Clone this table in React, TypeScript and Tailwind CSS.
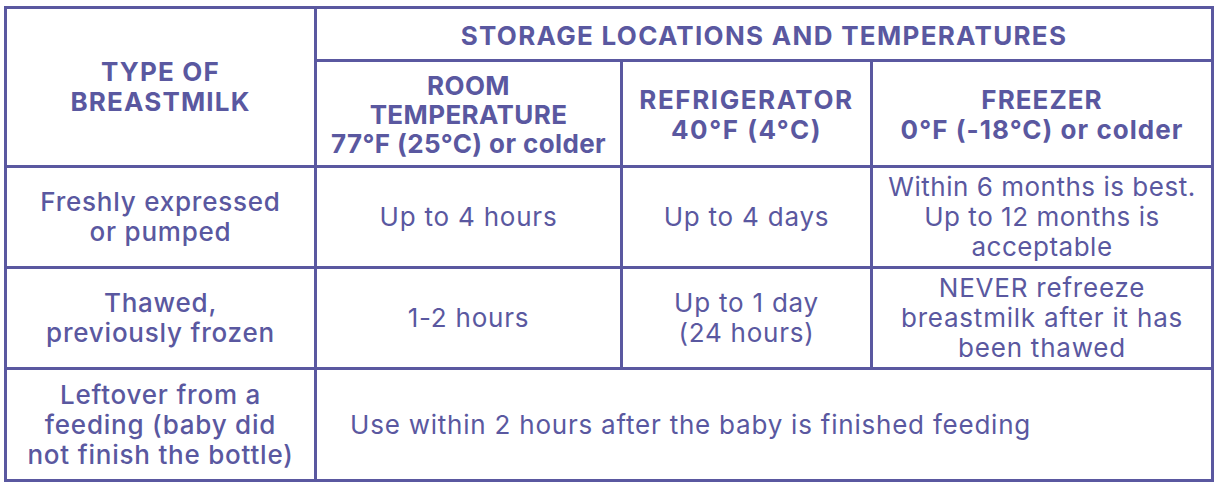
import React from "react";

const cell = "bg-white flex flex-col items-center justify-center text-center";
const head = `${cell} font-bold text-[26px]`;
const label = `${cell} font-medium text-[26px] leading-[30px] tracking-[0.03em]`;
const body = `${cell} font-normal text-[26px] leading-[30px]`;

export default function App() {
  return (
    <div className="w-[1220px] h-[489px] bg-white pt-[6px] pl-[4px]" style={{ fontFamily: "Inter, 'Noto Sans', sans-serif" }}>
      <div className="w-[1210px] bg-[#5a58a0] p-[3px] grid gap-[3px] grid-cols-[307px_303px_247px_338px] grid-rows-[50px_103px_98px_98px_109px] text-[#5a58a0]">
        <div className={`${head} row-span-2 leading-[30px] tracking-[0.045em]`}>
          <div>TYPE OF</div>
          <div>BREASTMILK</div>
        </div>
        <div className={`${head} col-span-3 leading-[30px] pt-[4px] tracking-[0.05em]`}>
          STORAGE LOCATIONS AND TEMPERATURES
        </div>
        <div className={`${head} leading-[29px] pt-[2px] tracking-[0.015em]`}>
          <div>ROOM</div>
          <div>TEMPERATURE</div>
          <div>77°F (25°C) or colder</div>
        </div>
        <div className={`${head} leading-[30px] pt-[2px] tracking-[0.06em]`}>
          <div>REFRIGERATOR</div>
          <div>40°F (4°C)</div>
        </div>
        <div className={`${head} leading-[30px] pt-[2px] tracking-[0.04em]`}>
          <div>FREEZER</div>
          <div>0°F (-18°C) or colder</div>
        </div>

        <div className={label}>
          <div>Freshly expressed</div>
          <div>or pumped</div>
        </div>
        <div className={`${body} tracking-[0.03em]`}>Up to 4 hours</div>
        <div className={`${body} tracking-[0.03em]`}>Up to 4 days</div>
        <div className={`${body} tracking-[0.02em]`}>
          <div>Within 6 months is best.</div>
          <div>Up to 12 months is</div>
          <div>acceptable</div>
        </div>

        <div className={label}>
          <div>Thawed,</div>
          <div>previously frozen</div>
        </div>
        <div className={`${body} tracking-[0.03em]`}>1-2 hours</div>
        <div className={`${body} tracking-[0.03em]`}>
          <div>Up to 1 day</div>
          <div>(24 hours)</div>
        </div>
        <div className={`${body} tracking-[0.03em]`}>
          <div>NEVER refreeze</div>
          <div>breastmilk after it has</div>
          <div>been thawed</div>
        </div>

        <div className={label}>
          <div>Leftover from a</div>
          <div>feeding (baby did</div>
          <div>not finish the bottle)</div>
        </div>
        <div className="bg-white col-span-3 flex items-center pl-[33px] text-[26px] leading-[30px] tracking-[0.03em]">
          Use within 2 hours after the baby is finished feeding
        </div>
      </div>
    </div>
  );
}
